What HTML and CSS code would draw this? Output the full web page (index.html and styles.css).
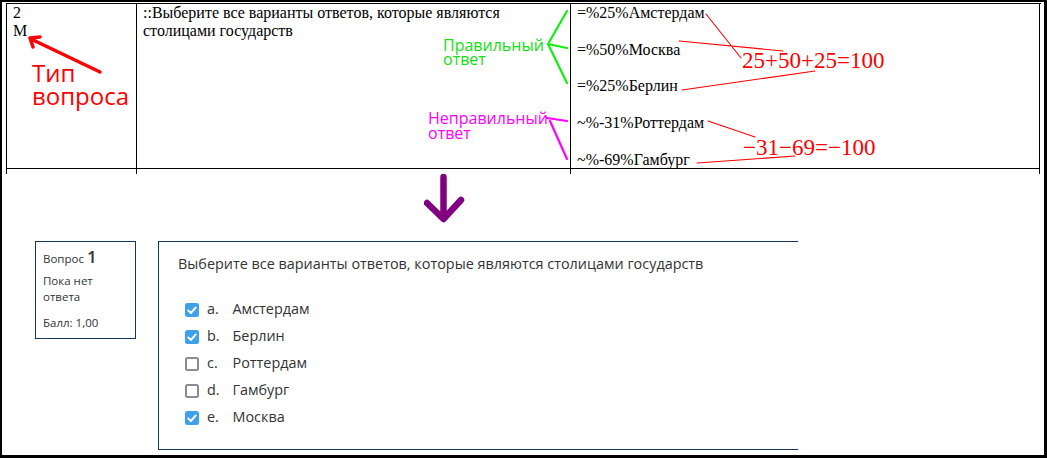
FILE: index.html
```html
<!DOCTYPE html>
<html lang="ru">
<head>
<meta charset="utf-8">
<title>GIFT → Moodle</title>
<link rel="stylesheet" href="styles.css">
</head>
<body>
<div class="frame">
  <div class="gift">
    <div class="cell c1">2<br>M</div>
    <div class="cell c2">::Выберите все варианты ответов, которые являются столицами государств</div>
    <div class="cell c3">
      <p>=%25%Амстердам</p>
      <p>=%50%Москва</p>
      <p>=%25%Берлин</p>
      <p>~%-31%Роттердам</p>
      <p>~%-69%Гамбург</p>
    </div>
    <div class="cell stub"></div>
    <div class="cell stub"></div>
    <div class="cell stub"></div>
  </div>

  <div class="arrow-row">
    <svg class="down-arrow" width="44" height="50" viewBox="0 0 44 50">
      <path d="M19.5 3 V44 M3 29 L19.5 45 L37 26" fill="none" stroke="#800080" stroke-width="6.5" stroke-linecap="round" stroke-linejoin="round"/>
    </svg>
  </div>

  <div class="quiz">
    <div class="info">
      <h3 class="qtitle">Вопрос <span class="qno">1</span></h3>
      <div class="state">Пока нет ответа</div>
      <div class="grade">Балл: 1,00</div>
    </div>
    <div class="content">
      <div class="qtext">Выберите все варианты ответов, которые являются столицами государств</div>
      <div class="answers">
        <div class="opt"><span class="cb on"><svg width="14" height="14" viewBox="0 0 14 14"><path d="M3.2 7.4 L5.9 10 L10.8 4.4" fill="none" stroke="#fff" stroke-width="1.9" stroke-linecap="round" stroke-linejoin="round"/></svg></span><span class="letter">a.</span><span class="label">Амстердам</span></div>
        <div class="opt"><span class="cb on"><svg width="14" height="14" viewBox="0 0 14 14"><path d="M3.2 7.4 L5.9 10 L10.8 4.4" fill="none" stroke="#fff" stroke-width="1.9" stroke-linecap="round" stroke-linejoin="round"/></svg></span><span class="letter">b.</span><span class="label">Берлин</span></div>
        <div class="opt"><span class="cb off"></span><span class="letter">c.</span><span class="label">Роттердам</span></div>
        <div class="opt"><span class="cb off"></span><span class="letter">d.</span><span class="label">Гамбург</span></div>
        <div class="opt"><span class="cb on"><svg width="14" height="14" viewBox="0 0 14 14"><path d="M3.2 7.4 L5.9 10 L10.8 4.4" fill="none" stroke="#fff" stroke-width="1.9" stroke-linecap="round" stroke-linejoin="round"/></svg></span><span class="letter">e.</span><span class="label">Москва</span></div>
      </div>
    </div>
  </div>
</div>

<svg class="overlay" width="1047" height="458" viewBox="0 0 1047 458">
  <g fill="none" stroke-linecap="round" stroke-linejoin="round">
    <path d="M100 72 L31 39 M33 47 L30 38 L40 37" stroke="#ff0000" stroke-width="3.5"/>
    <path d="M567 11 L548 44 L567 83 M548 44 L567 48" stroke="#11ee11" stroke-width="2.2"/>
    <path d="M547 118 L567 121 M550 121 L567 159" stroke="#ff00ff" stroke-width="2.2"/>
    <path d="M706 14 L741 58 M679 41 L783 51 M682 90 L815 71 M708 121 L755 137 M697 163 L795 156" stroke="#ff0000" stroke-width="1.1"/>
  </g>
  <g class="ann-sans">
    <text x="32" y="82" class="ann-big" fill="#ff0000">Тип</text>
    <text x="32" y="105" class="ann-big" fill="#ff0000">вопроса</text>
    <text x="443" y="51" class="ann-small" fill="#11e011">Правильный</text>
    <text x="443" y="65" class="ann-small" fill="#11e011">ответ</text>
    <text x="428" y="124" class="ann-small" fill="#ff00ff">Неправильный</text>
    <text x="428" y="139" class="ann-small" fill="#ff00ff">ответ</text>
  </g>
  <text x="742" y="68" class="ann-sum" fill="#ff0000">25+50+25=100</text>
  <text x="743" y="155" class="ann-sum" fill="#ff0000">−31−69=−100</text>
</svg>
</body>
</html>
```

FILE: styles.css
```css
html, body {
  margin: 0;
  padding: 0;
  background: #fff;
}

body {
  position: relative;
  width: 1047px;
  height: 458px;
  overflow: hidden;
}

.frame {
  box-sizing: border-box;
  width: 1047px;
  height: 458px;
  border-style: solid;
  border-color: #000;
  border-width: 2px 3px 3px 2px;
  display: flex;
  flex-direction: column;
}

/* ---------- GIFT source table ---------- */
.gift {
  margin: 1px 0 0 4px;
  width: 1034px;
  display: grid;
  grid-template-columns: 130px 434px 469px;
  grid-template-rows: 165px 5px;
  border-top: 1px solid #000;
  border-left: 1px solid #000;
  font-family: "Liberation Serif", "Times New Roman", serif;
  font-size: 16px;
  color: #000;
}

.cell {
  box-sizing: border-box;
  border-right: 1px solid #000;
  border-bottom: 1px solid #000;
  padding: 0 6px;
  line-height: 18px;
}

.cell.stub {
  border-bottom: none;
}

.c3 {
  line-height: 18.3px;
}

.c3 p {
  margin: 0 0 18.4px;
}

/* ---------- arrow ---------- */
.arrow-row {
  height: 67px;
  padding-left: 422px;
}

.down-arrow {
  display: block;
}

/* ---------- Moodle question ---------- */
.quiz {
  display: flex;
  align-items: flex-start;
  gap: 22px;
  padding-left: 33px;
  font-family: "Open Sans", "Noto Sans", sans-serif;
  color: #333;
}

.info {
  box-sizing: border-box;
  width: 101px;
  border: 1px solid #163660;
  padding: 6px 7px 8px;
  font-size: 11.5px;
}

.qtitle {
  margin: 0;
  font-size: 11.5px;
  font-weight: 400;
  line-height: 22px;
}

.qno {
  font-size: 17px;
  font-weight: 600;
  line-height: 17px;
}

.state {
  margin-top: 3px;
  line-height: 15.5px;
}

.grade {
  margin-top: 11px;
  line-height: 15px;
}

.content {
  box-sizing: border-box;
  width: 640px;
  height: 209px;
  border: 1px solid #163660;
  border-right: none;
  padding: 12px 0 0 19px;
  font-size: 14.4px;
}

.qtext {
  line-height: 20px;
}

.answers {
  margin: 21px 0 0 7px;
}

.opt {
  display: flex;
  align-items: flex-start;
  height: 27px;
  line-height: 27px;
}

.cb {
  box-sizing: border-box;
  width: 14px;
  height: 14px;
  margin-top: 8px;
  margin-right: 8px;
  border-radius: 2.5px;
  flex: none;
}

.cb svg {
  display: block;
}

.cb.on {
  background: #3fa1ea;
}

.cb.off {
  border: 2px solid #8b8b97;
  background: #fff;
}

.letter {
  width: 25.5px;
  flex: none;
}

/* ---------- annotations ---------- */
.overlay {
  position: absolute;
  left: 0;
  top: 0;
  pointer-events: none;
}

.ann-sans {
  font-family: "Open Sans", "Noto Sans", sans-serif;
}

.ann-big {
  font-size: 24px;
}

.ann-small {
  font-size: 16px;
}

.ann-sum {
  font-family: "Liberation Serif", "Times New Roman", serif;
  font-size: 23px;
}
```
